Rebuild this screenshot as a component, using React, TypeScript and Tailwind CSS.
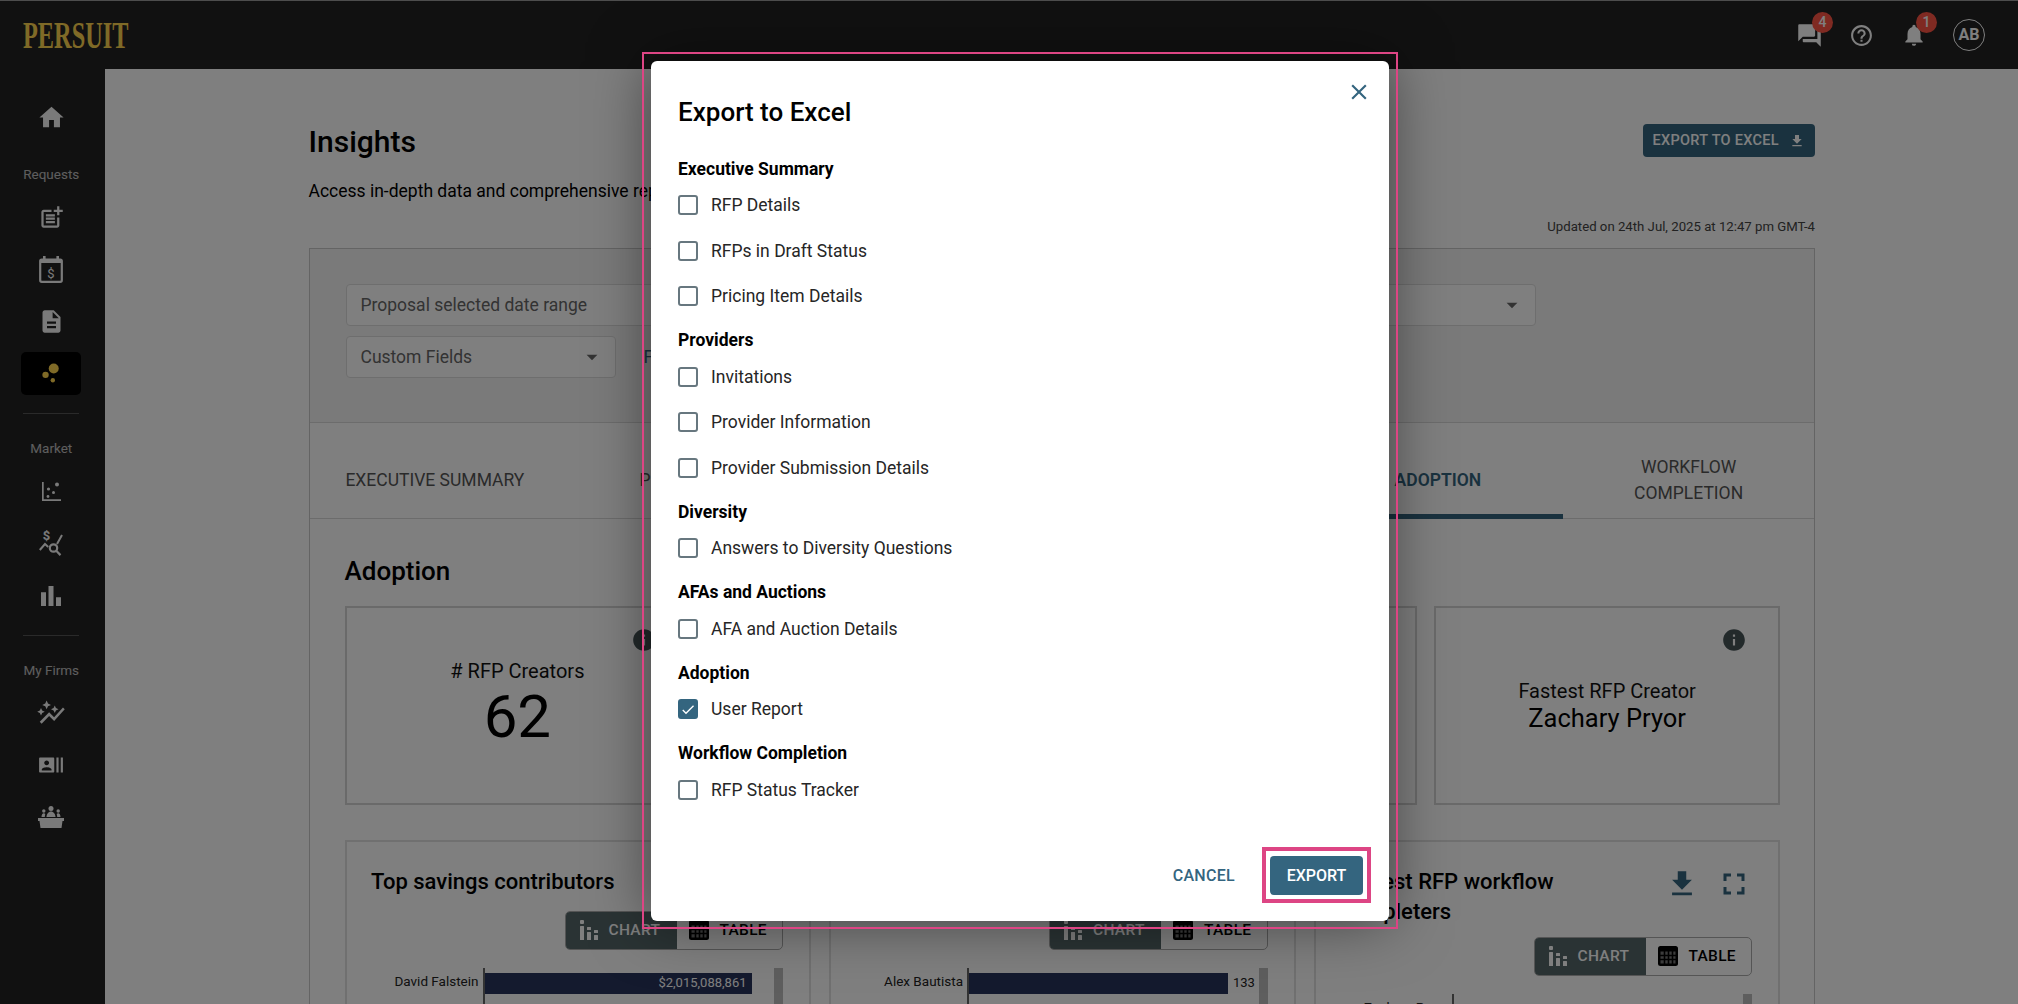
import React from "react";
import {
  MdHome, MdPostAdd, MdDescription, MdBarChart, MdAutoGraph, MdRecentActors,
  MdQuestionAnswer, MdHelpOutline, MdNotifications, MdFileDownload, MdInfo,
  MdClose, MdArrowDropDown, MdCheck, MdFullscreen,
} from "react-icons/md";

const ChartIcon = () => (
  <svg viewBox="0 0 18 20" className="h-[20px] w-[18px] text-white" fill="currentColor">
    <rect x="0" y="0" width="4" height="4" rx="1" />
    <rect x="0" y="6" width="4" height="14" rx="0.5" />
    <rect x="7" y="7" width="4" height="3" rx="0.5" />
    <rect x="7" y="12" width="4" height="8" rx="0.5" />
    <rect x="14" y="10" width="4" height="3" rx="0.5" />
    <rect x="14" y="15" width="4" height="5" rx="0.5" />
  </svg>
);

const TableIcon = () => (
  <svg viewBox="0 0 20 20" className="h-[20px] w-[20px]">
    <rect x="0" y="0" width="20" height="20" rx="2.500" fill="#000" />
    <path d="M2.500 5.500h15v12h-15z" fill="#777" />
    <path d="M6.500 5v13M10.500 5v13M14.500 5v13M2 9.500h16M2 13.500h16" stroke="#000" strokeWidth="1.600" />
  </svg>
);

const CalendarDollar = () => (
  <svg viewBox="0 0 24 27" className="h-[27px] w-[24px]" fill="none">
    <rect x="1.200" y="3.500" width="21.600" height="22.300" rx="1.500" stroke="currentColor" strokeWidth="2.200" />
    <rect x="1" y="3" width="22" height="4" fill="currentColor" />
    <rect x="4" y="0" width="2.600" height="4" fill="currentColor" />
    <rect x="17.400" y="0" width="2.600" height="4" fill="currentColor" />
    <text x="12" y="21.500" textAnchor="middle" fontSize="13" fontFamily="Roboto" fill="currentColor">$</text>
  </svg>
);

const Dots = () => (
  <svg viewBox="0 0 19 22" className="h-[20px] w-[18px]" fill="#ffd44f">
    <circle cx="12.500" cy="6" r="5.500" />
    <circle cx="3.500" cy="13" r="3.500" />
    <circle cx="11.500" cy="19" r="2.400" />
  </svg>
);

const Scatter = () => (
  <svg viewBox="0 0 19 19" className="h-[19px] w-[19px]" fill="currentColor">
    <path d="M0 0h1.700v17.300H19V19H0z" />
    <circle cx="15" cy="2.500" r="2" />
    <circle cx="6.500" cy="7" r="1.600" />
    <circle cx="11.500" cy="10.500" r="1.500" />
    <circle cx="6" cy="14.500" r="1.400" />
  </svg>
);

const MoneySearch = () => (
  <svg viewBox="0 0 24 26" className="h-[26px] w-[24px]" fill="none" stroke="currentColor">
    <text x="7.500" y="10" textAnchor="middle" fontSize="13" fontFamily="Roboto" fontWeight="700" fill="currentColor" stroke="none">$</text>
    <path d="M0.800 20l5.200-6 3.200 3M23 5l-5 9" strokeWidth="2" />
    <circle cx="14.500" cy="18" r="3.700" strokeWidth="2.200" />
    <path d="M17.200 20.800l4.300 4.300" strokeWidth="2.200" />
  </svg>
);

const Podium = () => (
  <svg viewBox="0 0 26 22" className="h-[22px] w-[26px]" fill="currentColor">
    <circle cx="13" cy="2.500" r="2.500" />
    <path d="M8.500 11c0-3 2-5.500 4.500-5.500s4.500 2.500 4.500 5.500z" />
    <circle cx="5.800" cy="5" r="1.700" />
    <path d="M3.500 11c0-2.200 1-3.700 2.300-3.700.6 0 1.200.3 1.500.8-.3 1-.5 1.900-.5 2.900z" />
    <circle cx="20.200" cy="5" r="1.700" />
    <path d="M22.500 11c0-2.200-1-3.700-2.300-3.700-.6 0-1.200.3-1.500.8.300 1 .5 1.900.5 2.900z" />
    <path d="M0 12h26v3h-1.500l-1 7h-21l-1-7H0z" />
  </svg>
);

const Toggle = () => (
  <div className="flex h-[38.500px] w-[218.500px] self-end overflow-hidden rounded-[5px] border border-[#aaa]">
    <div className="flex w-[111px] items-center gap-[11px] bg-[#556668] pl-[14px] text-[15.500px] font-medium tracking-[0.3px] text-white">
      <ChartIcon />
      <span>CHART</span>
    </div>
    <div className="flex flex-1 items-center gap-[11px] pl-[12px] text-[15.500px] font-medium tracking-[0.3px] text-black">
      <TableIcon />
      <span>TABLE</span>
    </div>
  </div>
);

const SideItem = ({ c, children, active }: { c: string; children: React.ReactNode; active?: boolean }) => (
  <div className={`flex w-[60px] items-center justify-center text-[#f5f5f5] ${c} ${active ? "rounded-[5px] bg-black" : ""}`}>{children}</div>
);

const SideLabel = ({ children, c }: { children: React.ReactNode; c: string }) => (
  <div className={`text-[13.500px] leading-[18px] text-white opacity-70 ${c}`}>{children}</div>
);

const Select = ({ label, w }: { label: string; w: string }) => (
  <div className={`flex h-[42px] items-center justify-between rounded-[4px] border border-[#dcdcdc] bg-white pl-[14px] pr-[10px] text-[17.500px] text-[#666] ${w}`}>
    <span>{label}</span>
    <MdArrowDropDown size={26} className="text-[#666]" />
  </div>
);

const StatCard = ({ children }: { children: React.ReactNode }) => (
  <div className="relative flex h-[199px] flex-col items-center border-2 border-[#d4d4d4]">
    <MdInfo size={26} className="absolute right-[31px] top-[19px] text-[#465457]" />
    {children}
  </div>
);

const Bar = ({ w, value, inside }: { w: string; value?: string; inside?: boolean }) => (
  <div className="mb-[10px] flex h-[21px] items-center">
    <div className={`flex h-full items-center justify-end bg-[#28345c] pr-[5px] text-[13px] text-white ${w}`}>{inside ? value : ""}</div>
    {!inside && value && <span className="ml-[5px] text-[13px] text-[#222]">{value}</span>}
  </div>
);

const ChartCard = ({ title, two, label, children }: { title: string; two?: boolean; label: string; children: React.ReactNode }) => (
  <div className="relative flex h-[240px] flex-col border-2 border-b-0 border-[#e0e0e0] pl-[24.500px] pr-[26px] pt-[25px]">
    {two && (
      <div className="absolute right-[26px] top-[24px] flex items-center gap-[17px] text-[#34657f]">
        <MdFileDownload size={34} />
        <MdFullscreen size={36} />
      </div>
    )}
    <div className="w-[290px] whitespace-pre-line text-[22px] leading-[30px] font-medium text-black">{title}</div>
    <div className={`flex flex-col ${two ? "mt-[10px]" : "mt-[14px]"}`}><Toggle /></div>
    <div className="mt-[18px] flex flex-1">
      <div className="w-[111.500px] shrink-0 whitespace-nowrap pr-[4px] pt-[3px] text-right text-[13.500px] leading-[20px] text-[#222]">{label}</div>
      <div className="flex-1 border-l-2 border-[#666] pt-[5px]">{children}</div>
      <div className="w-[9px] shrink-0 bg-[#bcbcbc]" />
    </div>
  </div>
);

const Check = ({ label, on }: { label: string; on?: boolean }) => (
  <div className="flex h-[45.500px] items-center gap-[13px]">
    <div className={`flex h-[20px] w-[20px] items-center justify-center rounded-[3px] border-2 ${on ? "border-[#34657f] bg-[#34657f]" : "border-[#67777f] bg-white"}`}>
      {on && <MdCheck size={19} className="text-white" />}
    </div>
    <span className="text-[17.500px] text-[#262626]">{label}</span>
  </div>
);

const Heading = ({ children }: { children: React.ReactNode }) => (
  <div className="mt-[8px] h-[27px] text-[17.500px] leading-[27px] font-bold text-black">{children}</div>
);

const tabs = ["EXECUTIVE SUMMARY", "PROVIDERS", "DIVERSITY", "AFAS AND AUCTIONS", "ADOPTION", "WORKFLOW COMPLETION"];

export default function App() {
  return (
    <div className="relative h-[1004px] w-[2018px] overflow-hidden bg-white font-['Roboto',sans-serif]">
      <header className="flex h-[69px] items-center justify-between border-t border-t-[#9a9a9a] bg-[#222222] pl-[23px] pr-[33px]">
        <div className="origin-left scale-x-[0.64] font-['Liberation_Serif',serif] text-[38px] leading-none font-bold text-[#ffd44f]">PERSUIT</div>
        <div className="flex items-center text-white">
          <div className="relative">
            <MdQuestionAnswer size={27} />
            <span className="absolute -right-[10px] -top-[10px] flex h-[21px] w-[21px] items-center justify-center rounded-full bg-[#ff5544] text-[14px] font-medium">4</span>
          </div>
          <MdHelpOutline size={25} className="ml-[25.500px]" />
          <div className="relative ml-[27.500px]">
            <MdNotifications size={26} />
            <span className="absolute -right-[10px] -top-[10px] flex h-[21px] w-[21px] items-center justify-center rounded-full bg-[#ff5544] text-[14px] font-medium">1</span>
          </div>
          <div className="ml-[26px] flex h-[32px] w-[32px] items-center justify-center rounded-full border-[1.500px] border-white text-[16px] font-bold">AB</div>
        </div>
      </header>
      <div className="flex h-[935px]">
        <aside className="flex w-[104.500px] shrink-0 flex-col items-center bg-[#222222] pr-[2px] pt-[28px]">
          <SideItem c="h-[40px]"><MdHome size={29} /></SideItem>
          <SideLabel c="mt-[28px]">Requests</SideLabel>
          <SideItem c="h-[40px] mt-[14.600px]"><MdPostAdd size={27} /></SideItem>
          <SideItem c="h-[40px] mt-[12.400px]"><CalendarDollar /></SideItem>
          <SideItem c="h-[40px] mt-[11.600px]"><MdDescription size={27} /></SideItem>
          <SideItem c="h-[43px] mt-[10.400px]" active><Dots /></SideItem>
          <div className="mt-[18px] h-[1px] w-[56px] bg-[#555]" />
          <SideLabel c="mt-[25px]">Market</SideLabel>
          <SideItem c="h-[40px] mt-[15px]"><Scatter /></SideItem>
          <SideItem c="h-[40px] mt-[11px]"><MoneySearch /></SideItem>
          <SideItem c="h-[40px] mt-[12.700px]"><MdBarChart size={30} /></SideItem>
          <div className="mt-[19.300px] h-[1px] w-[56px] bg-[#555]" />
          <SideLabel c="mt-[25px]">My Firms</SideLabel>
          <SideItem c="h-[40px] mt-[14.500px]"><MdAutoGraph size={30} /></SideItem>
          <SideItem c="h-[40px] mt-[11.900px]"><MdRecentActors size={26} /></SideItem>
          <SideItem c="h-[40px] mt-[12px]"><Podium /></SideItem>
        </aside>
        <main className="flex-1 overflow-hidden pl-[204px] pr-[203px] pt-[55px]">
          <div className="flex h-[33px] items-center justify-between">
            <div className="mt-[3px] text-[30px] leading-[36px] font-medium text-black">Insights</div>
            <div className="flex h-[33px] w-[172.500px] items-center justify-center gap-[10px] rounded-[4px] bg-[#34657f] text-[14.500px] font-medium tracking-[0.3px] text-white">
              <span>EXPORT TO EXCEL</span>
              <MdFileDownload size={16} />
            </div>
          </div>
          <div className="mt-[22px] text-[17.500px] leading-[24px] text-black">Access in-depth data and comprehensive reports</div>
          <div className="mt-[14px] text-right text-[13.200px] leading-[20px] text-[#444]">Updated on 24th Jul, 2025 at 12:47 pm GMT-4</div>
          <div className="mt-[11px] border-x border-t border-[#c8c8c8]">
            <div className="flex h-[174px] flex-col gap-[10px] border-b border-[#d8d8d8] bg-[#f5f5f5] pl-[36px] pt-[35px]">
              <Select label="Proposal selected date range" w="w-[1190px]" />
              <div className="flex items-center gap-[28px]">
                <Select label="Custom Fields" w="w-[270px]" />
                <span className="text-[17.500px] text-[#34657f]">From</span>
              </div>
            </div>
            <div className="flex h-[96px] border-b border-[#d8d8d8]">
              {tabs.map((t, i) => (
                <div
                  key={t}
                  className={`flex flex-1 items-center justify-center px-[34px] text-center text-[17.500px] leading-[26px] ${i === 4 ? "-mb-px border-b-[5px] border-[#34657f] pt-[23px] font-semibold text-[#34657f]" : "pt-[18px] text-[#555]"}`}
                >
                  {t}
                </div>
              ))}
            </div>
            <div className="pl-[35px] pr-[34px] pt-[36px]">
              <div className="text-[26px] leading-[32px] font-medium text-black">Adoption</div>
              <div className="mt-[19px] grid grid-cols-4 gap-[17.500px]">
                <StatCard>
                  <div className="mt-[50px] text-[20px] leading-[26px] text-[#111]">{"# RFP Creators"}</div>
                  <div className="text-[60px] leading-[66px] text-black">62</div>
                </StatCard>
                <StatCard>
                  <div className="mt-[50px] text-[20px] leading-[26px] text-[#111]">RFPs Created</div>
                </StatCard>
                <StatCard>
                  <div className="mt-[50px] text-[20px] leading-[26px] text-[#111]">Average Savings</div>
                </StatCard>
                <StatCard>
                  <div className="mt-[70px] text-[20px] leading-[26px] text-[#111]">Fastest RFP Creator</div>
                  <div className="text-[25.500px] leading-[28px] text-black">Zachary Pryor</div>
                </StatCard>
              </div>
              <div className="mt-[35px] grid grid-cols-3 gap-[18px]">
                <ChartCard title="Top savings contributors" label="David Falstein">
                  <Bar w="w-[267px]" value="$2,015,088,861" inside />
                  <Bar w="w-[162px]" inside />
                </ChartCard>
                <ChartCard title="Top RFP creators" label="Alex Bautista">
                  <Bar w="w-[259px]" value="133" />
                  <Bar w="w-[200px]" />
                </ChartCard>
                <ChartCard two title={"Fastest RFP workflow\ncompleters"} label="Zachary Pryor">
                  <div className="pl-[6px] text-[13.500px] leading-[20px] text-[#222]">38</div>
                </ChartCard>
              </div>
            </div>
          </div>
        </main>
      </div>

      <div className="absolute inset-0 bg-black/50" />

      <div className="absolute left-[651px] top-[61px] flex h-[860px] w-[738px] flex-col rounded-[6px] bg-white pl-[27px] shadow-[0_0_60px_rgba(0,0,0,0.5)]">
        <MdClose size={26} className="absolute right-[17px] top-[18px] text-[#34657f]" />
        <div className="mt-[34px] h-[34px] text-[26px] leading-[34px] font-medium text-black">Export to Excel</div>
        <div className="mt-[18.500px]">
          <Heading>Executive Summary</Heading>
          <Check label="RFP Details" />
          <Check label="RFPs in Draft Status" />
          <Check label="Pricing Item Details" />
          <Heading>Providers</Heading>
          <Check label="Invitations" />
          <Check label="Provider Information" />
          <Check label="Provider Submission Details" />
          <Heading>Diversity</Heading>
          <Check label="Answers to Diversity Questions" />
          <Heading>AFAs and Auctions</Heading>
          <Check label="AFA and Auction Details" />
          <Heading>Adoption</Heading>
          <Check label="User Report" on />
          <Heading>Workflow Completion</Heading>
          <Check label="RFP Status Tracker" />
        </div>
        <div className="mb-[26px] mt-auto flex items-center justify-end gap-[35px] pr-[26px]">
          <span className="text-[16px] font-medium tracking-[0.3px] text-[#34657f]">CANCEL</span>
          <div className="flex h-[39px] w-[93px] items-center justify-center rounded-[4px] bg-[#34657f] text-[16px] font-medium text-white">EXPORT</div>
        </div>
      </div>

      <div className="pointer-events-none absolute left-[642px] top-[52px] h-[877px] w-[756px] border-2 border-[#dd4584]" />
      <div className="pointer-events-none absolute left-[1262px] top-[847px] h-[56px] w-[109px] border-[4px] border-[#dd4584]" />
    </div>
  );
}
